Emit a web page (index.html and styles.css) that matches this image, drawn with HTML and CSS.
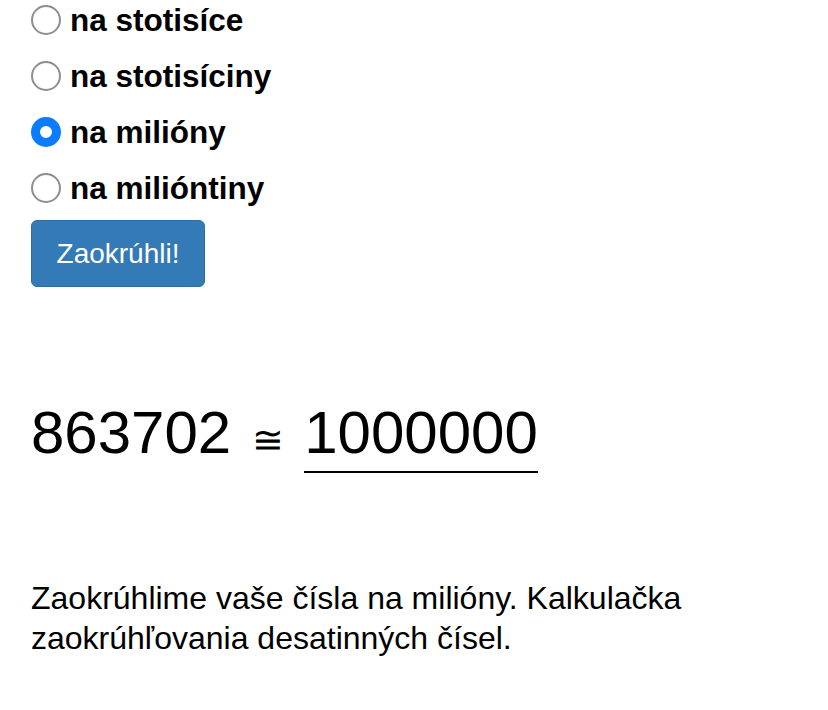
FILE: index.html
```html
<!DOCTYPE html>
<html lang="sk">
<head>
<meta charset="utf-8">
<title>Zaokrúhľovanie</title>
<link rel="stylesheet" href="styles.css">
</head>
<body>
<main class="page">
  <form class="round-form">
    <label class="option"><input type="radio" name="r" class="radio"><span>na stotisíce</span></label>
    <label class="option"><input type="radio" name="r" class="radio"><span>na stotisíciny</span></label>
    <label class="option"><input type="radio" name="r" class="radio" checked><span>na milióny</span></label>
    <label class="option"><input type="radio" name="r" class="radio"><span>na milióntiny</span></label>
    <button type="button" class="btn">Zaokrúhli!</button>
  </form>
  <div class="result">
    <span class="num">863702</span>
    <span class="approx">≅</span>
    <span class="num rounded">1000000</span>
  </div>
  <p class="desc">Zaokrúhlime vaše čísla na milióny. Kalkulačka zaokrúhľovania desatinných čísel.</p>
</main>
</body>
</html>
```
FILE: styles.css
```css
html, body {
  margin: 0;
  padding: 0;
  background: #fff;
}
body {
  font-family: "Liberation Sans", Arial, Helvetica, sans-serif;
  color: #000;
}
.page {
  padding: 0 31px;
}
.round-form {
  display: flex;
  flex-direction: column;
  align-items: flex-start;
  gap: 16px;
}
.option {
  display: flex;
  align-items: center;
  height: 40px;
  gap: 9px;
  font-weight: bold;
  font-size: 31.5px;
}
.radio {
  appearance: none;
  -webkit-appearance: none;
  margin: 0;
  width: 30px;
  height: 30px;
  border: 2.5px solid #8e8e8e;
  border-radius: 50%;
  background: #fff;
  box-sizing: border-box;
}
.radio:checked {
  border: 9.5px solid #0a7cff;
  background: #fff;
}
.btn {
  margin-top: -4px;
  width: 174px;
  height: 67px;
  background: #337ab7;
  border: 1px solid #2e6da4;
  border-radius: 6px;
  color: #fff;
  font-family: "Liberation Sans", Arial, sans-serif;
  font-size: 28px;
  padding: 0;
}
.result {
  display: flex;
  align-items: baseline;
  margin-top: 116px;
  font-size: 60px;
  line-height: 1;
}
.approx {
  font-size: 38px;
  margin: 0 20px 0 21px;
}
.rounded {
  border-bottom: 2px solid #000;
  padding-bottom: 8px;
}
.desc {
  margin: 105px 0 0;
  font-size: 32px;
  line-height: 40px;
  max-width: 720px;
}
```
